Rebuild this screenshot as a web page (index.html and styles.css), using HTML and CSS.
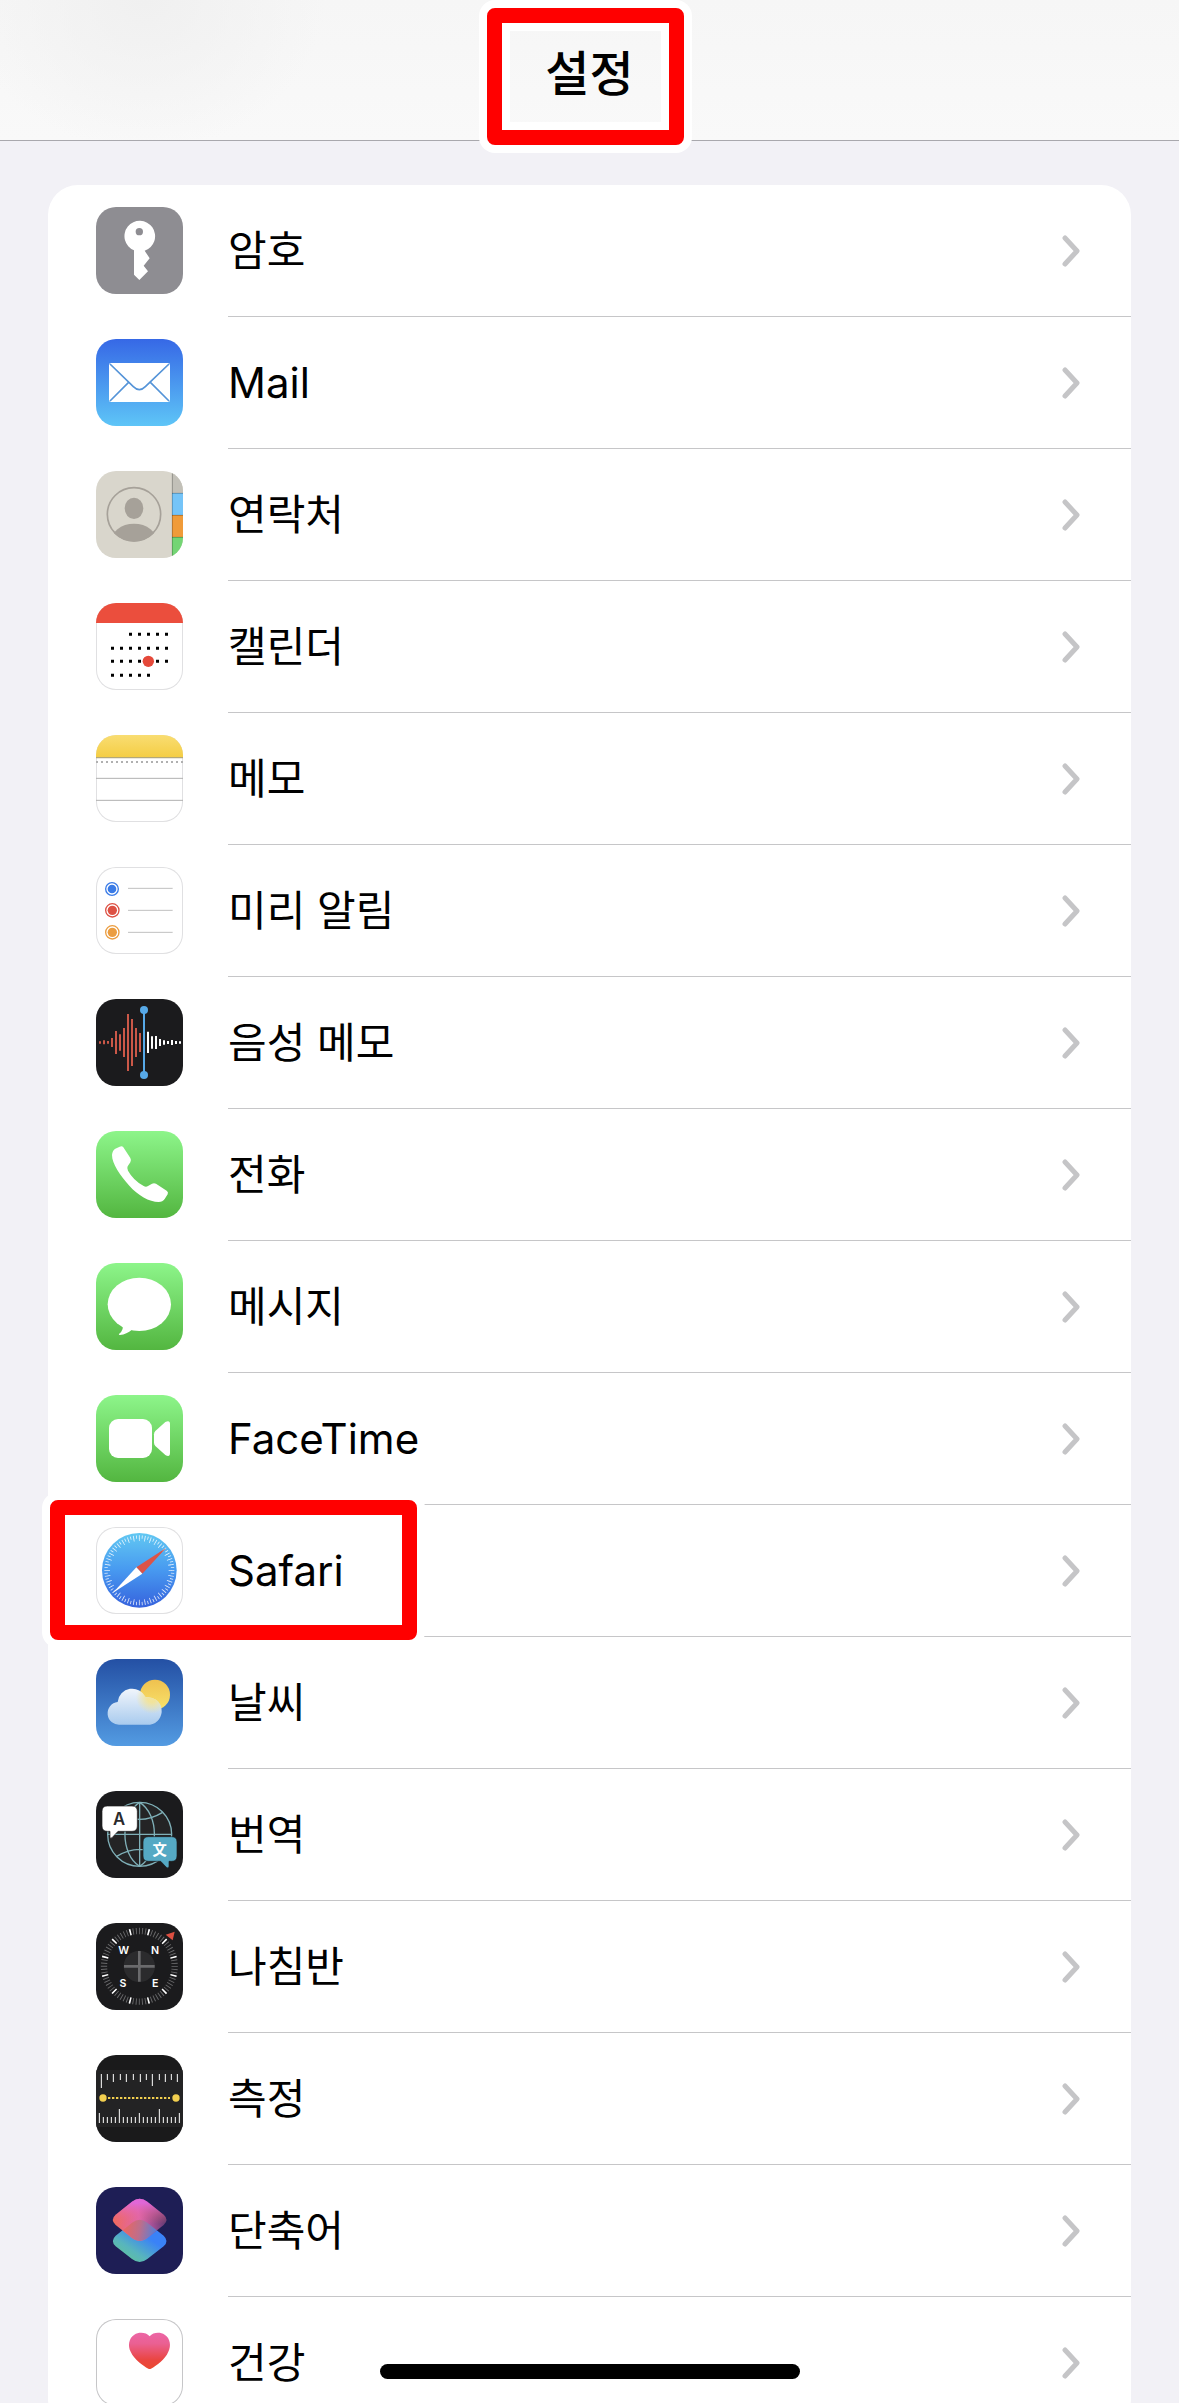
FILE: index.html
```
<!DOCTYPE html>
<html lang="ko">

<head>
    <meta charset="UTF-8">
    <meta name="viewport" content="width=device-width, initial-scale=1.0">
    <title>설정</title>
    <link rel="stylesheet" href="styles.css">
</head>

<body>
    <!-- Shared gradients and the row arrow -->
    <svg class="defs" aria-hidden="true">
        <defs>
            <linearGradient id="green" x1="0" y1="0" x2="0" y2="1">
                <stop offset="0" stop-color="#8df58a" />
                <stop offset="1" stop-color="#53b640" />
            </linearGradient>
            <linearGradient id="mail" x1="0" y1="0" x2="0" y2="1">
                <stop offset="0" stop-color="#3668e6" />
                <stop offset="1" stop-color="#5ec5f7" />
            </linearGradient>
            <linearGradient id="yellow" x1="0" y1="0" x2="0" y2="1">
                <stop offset="0" stop-color="#f9dd72" />
                <stop offset="1" stop-color="#f4cd43" />
            </linearGradient>
            <linearGradient id="safari" x1="0" y1="0" x2="0" y2="1">
                <stop offset="0" stop-color="#62c8f2" />
                <stop offset="0.5" stop-color="#4799f0" />
                <stop offset="1" stop-color="#3662dd" />
            </linearGradient>
            <linearGradient id="sky" x1="0" y1="0" x2="0" y2="1">
                <stop offset="0" stop-color="#2450a4" />
                <stop offset="1" stop-color="#539be2" />
            </linearGradient>
            <linearGradient id="sun" x1="0" y1="0" x2="0" y2="1">
                <stop offset="0" stop-color="#efc14f" />
                <stop offset="1" stop-color="#f8e36c" />
            </linearGradient>
            <linearGradient id="cloud" gradientUnits="userSpaceOnUse" x1="0" y1="84" x2="0" y2="197">
                <stop offset="0" stop-color="#f4f7fc" />
                <stop offset="1" stop-color="#a9cbee" />
            </linearGradient>
            <radialGradient id="glow" gradientUnits="userSpaceOnUse" cx="168" cy="116" r="48">
                <stop offset="0.3" stop-color="#f4e392" stop-opacity="0.9" />
                <stop offset="1" stop-color="#f4e392" stop-opacity="0" />
            </radialGradient>
            <linearGradient id="pink" x1="0" y1="0.6" x2="1" y2="0.5">
                <stop offset="0" stop-color="#f06a5a" />
                <stop offset="0.5" stop-color="#de65b4" />
                <stop offset="1" stop-color="#5d3770" />
            </linearGradient>
            <linearGradient id="coral" x1="0" y1="0" x2="0" y2="1">
                <stop offset="0.1" stop-color="#e268dc" stop-opacity="0.9" />
                <stop offset="0.6" stop-color="#f0685c" stop-opacity="0" />
            </linearGradient>
            <linearGradient id="teal" x1="0.2" y1="1" x2="0.8" y2="0.3">
                <stop offset="0" stop-color="#62c596" />
                <stop offset="0.35" stop-color="#58b5bd" />
                <stop offset="0.8" stop-color="#3a82f7" />
            </linearGradient>
            <linearGradient id="overlap" gradientUnits="userSpaceOnUse" x1="80" y1="110" x2="185" y2="130">
                <stop offset="0" stop-color="#f0665a" />
                <stop offset="0.5" stop-color="#bd6e8c" />
                <stop offset="1" stop-color="#4d80dc" />
            </linearGradient>
            <linearGradient id="heart" x1="0" y1="0" x2="0" y2="1">
                <stop offset="0" stop-color="#ec66a6" />
                <stop offset="0.3" stop-color="#ea6092" />
                <stop offset="0.75" stop-color="#ea4540" />
                <stop offset="1" stop-color="#ea4930" />
            </linearGradient>
            <clipPath id="avatar">
                <circle cx="114" cy="130" r="82" />
            </clipPath>
            <symbol id="arrow" viewBox="0 0 18 32">
                <path d="M3 3L15 16L3 29" fill="none" stroke="#c5c5c7" stroke-width="5" stroke-linecap="round" stroke-linejoin="round" />
            </symbol>
        </defs>
    </svg>

    <header class="navbar">
        <h1 class="title">설정</h1>
        <span class="marker marker-title"></span>
    </header>

    <main class="content">
        <ul class="list">
            <li>
                <a class="row" href="#">
                    <svg class="icon" viewBox="0 0 261 261" aria-hidden="true">
                        <rect width="261" height="261" fill="#8e8d92" />
                        <path d="M114 130A46 46 0 1 1 146 131L161 154L143 176L156 193L130 219L114 203Z" fill="#fff" />
                        <circle cx="130" cy="74" r="11" fill="#8e8d92" />
                    </svg>
                    <span class="row-body">
                        <span class="label">암호</span>
                        <svg class="arrow"><use href="#arrow" /></svg>
                    </span>
                </a>
            </li>
            <li>
                <a class="row" href="#">
                    <svg class="icon" viewBox="0 0 261 261" aria-hidden="true">
                        <rect width="261" height="261" fill="url(#mail)" />
                        <rect x="39" y="72" width="183" height="117" rx="6" fill="#fff" />
                        <path d="M42 75L112 143Q130 161 148 143L219 75M97 131L42 186M164 131L219 186" fill="none" stroke="#5594d8" stroke-width="5" />
                    </svg>
                    <span class="row-body">
                        <span class="label" lang="en">Mail</span>
                        <svg class="arrow"><use href="#arrow" /></svg>
                    </span>
                </a>
            </li>
            <li>
                <a class="row" href="#">
                    <svg class="icon" viewBox="0 0 261 261" aria-hidden="true">
                        <rect width="261" height="261" fill="#d9d6cc" />
                        <rect x="228" width="33" height="66" fill="#c2c0b8" />
                        <rect x="228" y="66" width="33" height="66" fill="#75c4f8" />
                        <rect x="228" y="132" width="33" height="66" fill="#f09b39" />
                        <rect x="228" y="198" width="33" height="63" fill="#74d574" />
                        <path d="M228 67H261M228 133H261M228 199H261M229 0V261" stroke="#000" stroke-opacity="0.25" stroke-width="3" />
                        <circle cx="114" cy="130" r="80" fill="none" stroke="#a6a199" stroke-width="5" />
                        <ellipse cx="114" cy="112" rx="28" ry="32" fill="#a6a199" />
                        <ellipse cx="114" cy="214" rx="70" ry="56" fill="#a6a199" clip-path="url(#avatar)" />
                    </svg>
                    <span class="row-body">
                        <span class="label">연락처</span>
                        <svg class="arrow"><use href="#arrow" /></svg>
                    </span>
                </a>
            </li>
            <li>
                <a class="row" href="#">
                    <svg class="icon icon-light" viewBox="0 0 261 261" aria-hidden="true">
                        <rect width="261" height="60" fill="#eb4e3d" />
                        <path d="M99 94H216M45 136H216M45 175H216M45 217H162" stroke="#000" stroke-width="9" stroke-dasharray="9 18" />
                        <circle cx="157" cy="175" r="17" fill="#e5493a" />
                    </svg>
                    <span class="row-body">
                        <span class="label">캘린더</span>
                        <svg class="arrow"><use href="#arrow" /></svg>
                    </span>
                </a>
            </li>
            <li>
                <a class="row" href="#">
                    <svg class="icon icon-light" viewBox="0 0 261 261" aria-hidden="true">
                        <rect width="261" height="68" fill="url(#yellow)" />
                        <path d="M0 68H261" stroke="#b3a878" stroke-width="4" />
                        <path d="M0 81H261" stroke="#b0b0b0" stroke-width="6" stroke-dasharray="6 9" />
                        <path d="M0 130H261M0 196H261" stroke="#b0b0b0" stroke-width="3" />
                    </svg>
                    <span class="row-body">
                        <span class="label">메모</span>
                        <svg class="arrow"><use href="#arrow" /></svg>
                    </span>
                </a>
            </li>
            <li>
                <a class="row" href="#">
                    <svg class="icon icon-light" viewBox="0 0 261 261" aria-hidden="true">
                        <g stroke-width="4">
                            <circle cx="48" cy="66" r="19" fill="none" stroke="#3a7be6" />
                            <circle cx="48" cy="66" r="13" fill="#3a7be6" />
                            <circle cx="49" cy="130" r="20" fill="none" stroke="#dd5144" />
                            <circle cx="49" cy="130" r="14" fill="#dd5144" />
                            <circle cx="49" cy="196" r="20" fill="none" stroke="#eb9d40" />
                            <circle cx="49" cy="196" r="14" fill="#eb9d40" />
                        </g>
                        <path d="M96 64H230M96 130H230M96 196H230" stroke="#c0c0c0" stroke-width="3" />
                    </svg>
                    <span class="row-body">
                        <span class="label">미리 알림</span>
                        <svg class="arrow"><use href="#arrow" /></svg>
                    </span>
                </a>
            </li>
            <li>
                <a class="row" href="#">
                    <svg class="icon" viewBox="0 0 261 261" aria-hidden="true">
                        <rect width="261" height="261" fill="#1b1b1d" />
                        <path d="M12 127V134M24 124V136M36 126V134M48 117V144M60 96V165M72 106V155M84 87V174M96 45V216M108 60V201M120 87V174M132 102V159" stroke="#cb5848" stroke-width="6" />
                        <path d="M156 98V162M168 112V149M180 111V150M192 120V141M204 124V137M216 126V135M228 123V138M240 126V135M252 127V134" stroke="#fff" stroke-width="6" />
                        <path d="M144 33V228" stroke="#57a9e8" stroke-width="6" />
                        <circle cx="144" cy="33" r="12" fill="#57a9e8" />
                        <circle cx="144" cy="228" r="12" fill="#57a9e8" />
                    </svg>
                    <span class="row-body">
                        <span class="label">음성 메모</span>
                        <svg class="arrow"><use href="#arrow" /></svg>
                    </span>
                </a>
            </li>
            <li>
                <a class="row" href="#">
                    <svg class="icon" viewBox="0 0 261 261" aria-hidden="true">
                        <rect width="261" height="261" fill="url(#green)" />
                        <path d="M71 47Q78 43 82 49L103 81Q107 88 103 94L95 106Q92 112 96 119Q112 148 143 165Q150 169 156 165L168 158Q174 155 180 158L212 179Q218 183 215 190L206 204Q200 213 188 213C160 213 125 192 100 164C72 134 48 98 48 72Q49 58 58 53Z" fill="#fff" />
                    </svg>
                    <span class="row-body">
                        <span class="label">전화</span>
                        <svg class="arrow"><use href="#arrow" /></svg>
                    </span>
                </a>
            </li>
            <li>
                <a class="row" href="#">
                    <svg class="icon" viewBox="0 0 261 261" aria-hidden="true">
                        <rect width="261" height="261" fill="url(#green)" />
                        <ellipse cx="130" cy="124" rx="95" ry="80" fill="#fff" />
                        <path d="M78 186Q86 198 69 213Q67 216 72 216Q92 213 108 200Z" fill="#fff" />
                    </svg>
                    <span class="row-body">
                        <span class="label">메시지</span>
                        <svg class="arrow"><use href="#arrow" /></svg>
                    </span>
                </a>
            </li>
            <li>
                <a class="row" href="#">
                    <svg class="icon" viewBox="0 0 261 261" aria-hidden="true">
                        <rect width="261" height="261" fill="url(#green)" />
                        <rect x="39" y="72" width="129" height="117" rx="27" fill="#fff" />
                        <path d="M178 108L208 81Q222 74 222 87V174Q222 188 208 180L178 153Q174 149 174 143V118Q174 112 178 108Z" fill="#fff" />
                    </svg>
                    <span class="row-body">
                        <span class="label" lang="en">FaceTime</span>
                        <svg class="arrow"><use href="#arrow" /></svg>
                    </span>
                </a>
            </li>
            <li class="marked">
                <a class="row" href="#">
                    <svg class="icon icon-light" viewBox="0 0 261 261" aria-hidden="true">
                        <circle cx="130" cy="130" r="112" fill="url(#safari)" />
                        <circle cx="130" cy="130" r="100" fill="none" stroke="#fff" stroke-opacity="0.8" stroke-width="10" pathLength="72" stroke-dasharray="0.3 0.7" stroke-dashoffset="0.15" />
                        <circle cx="130" cy="130" r="92" fill="none" stroke="#fff" stroke-opacity="0.8" stroke-width="8" pathLength="72" stroke-dasharray="0.3 1.7" stroke-dashoffset="0.15" />
                        <path d="M210 63L121 121L139 140Z" fill="#dc5348" />
                        <path d="M51 197L121 121L139 140Z" fill="#fff" />
                    </svg>
                    <span class="row-body">
                        <span class="label" lang="en">Safari</span>
                        <svg class="arrow"><use href="#arrow" /></svg>
                    </span>
                </a>
                <span class="marker marker-row"></span>
            </li>
            <li>
                <a class="row" href="#">
                    <svg class="icon" viewBox="0 0 261 261" aria-hidden="true">
                        <rect width="261" height="261" fill="url(#sky)" />
                        <circle cx="177" cy="107" r="45" fill="url(#sun)" />
                        <path d="M73 197A34 34 0 0 1 65 129A44 44 0 0 1 149 115A41 41 0 0 1 162 197Z" fill="url(#cloud)" />
                        <path d="M73 197A34 34 0 0 1 65 129A44 44 0 0 1 149 115A41 41 0 0 1 162 197Z" fill="url(#glow)" />
                    </svg>
                    <span class="row-body">
                        <span class="label">날씨</span>
                        <svg class="arrow"><use href="#arrow" /></svg>
                    </span>
                </a>
            </li>
            <li>
                <a class="row" href="#">
                    <svg class="icon" viewBox="0 0 261 261" aria-hidden="true">
                        <rect width="261" height="261" fill="#1b1b1d" />
                        <g fill="none" stroke="#7fb0b8" stroke-width="4">
                            <circle cx="131" cy="130" r="96" fill="#242425" />
                            <path d="M131 34V226M35 130H227M131 34C190 70 190 190 131 226M131 34C72 70 72 190 131 226M62 64Q131 106 200 64M62 196Q131 154 200 196" />
                        </g>
                        <path d="M34 45H108Q124 45 124 61V105Q124 121 108 121H66L48 140Q42 145 42 138V121H34Q18 121 18 105V61Q18 45 34 45Z" fill="#fff" stroke="#1b1b1d" stroke-width="2" />
                        <path d="M157 137H227Q243 137 243 153V195Q243 211 227 211H219V226Q218 235 211 229L194 211H157Q141 211 141 195V153Q141 137 157 137Z" fill="#55a9c4" stroke="#1b1b1d" stroke-width="2" />
                        <text class="icon-text" x="69" y="101" font-size="50" fill="#2a2a2c">A</text>
                        <text class="icon-text" x="191" y="191" font-size="43" fill="#fff">文</text>
                    </svg>
                    <span class="row-body">
                        <span class="label">번역</span>
                        <svg class="arrow"><use href="#arrow" /></svg>
                    </span>
                </a>
            </li>
            <li>
                <a class="row" href="#">
                    <svg class="icon" viewBox="0 0 261 261" aria-hidden="true">
                        <rect width="261" height="261" fill="#1b1b1d" />
                        <circle cx="130" cy="130" r="106" fill="none" stroke="#69696b" stroke-width="19" pathLength="72" stroke-dasharray="0.3 0.7" stroke-dashoffset="0.15" />
                        <circle cx="130" cy="130" r="106" fill="none" stroke="#fff" stroke-width="19" pathLength="72" stroke-dasharray="0.5 5.5" stroke-dashoffset="-2.75" />
                        <circle cx="130" cy="130" r="47" fill="#2b2b2d" />
                        <path d="M130 84V176M84 130H176" stroke="#6a6a6c" stroke-width="8" />
                        <path d="M236 26L209 35L230 52Z" fill="#dc4f41" />
                        <g class="icon-text" font-size="32" fill="#fff">
                            <text x="83" y="93">W</text>
                            <text x="177" y="93">N</text>
                            <text x="81" y="192">S</text>
                            <text x="178" y="192">E</text>
                        </g>
                    </svg>
                    <span class="row-body">
                        <span class="label">나침반</span>
                        <svg class="arrow"><use href="#arrow" /></svg>
                    </span>
                </a>
            </li>
            <li>
                <a class="row" href="#">
                    <svg class="icon" viewBox="0 0 261 261" aria-hidden="true">
                        <rect width="261" height="261" fill="#1a1a1b" />
                        <rect y="45" width="261" height="171" fill="#232324" />
                        <path d="M16 57V99M34 57V75M52 57V81M73 57V75M91 57V81M112 57V75M133 57V81M151 57V75M169 57V93M190 57V75M208 57V81M226 57V75M244 57V81" stroke="#fff" stroke-width="3" />
                        <path d="M10 204V174M22 204V186M34 204V186M46 204V186M58 204V186M70 204V162M82 204V186M94 204V186M106 204V186M118 204V186M130 204V174M142 204V186M154 204V186M166 204V186M178 204V186M190 204V162M202 204V186M214 204V186M226 204V186M238 204V186M250 204V174" stroke="#fff" stroke-width="3" />
                        <path d="M36 129H222" stroke="#f2cf4f" stroke-width="6" stroke-dasharray="7 5" />
                        <circle cx="21" cy="129" r="11" fill="#f2cf4f" />
                        <circle cx="240" cy="129" r="11" fill="#f2cf4f" />
                    </svg>
                    <span class="row-body">
                        <span class="label">측정</span>
                        <svg class="arrow"><use href="#arrow" /></svg>
                    </span>
                </a>
            </li>
            <li>
                <a class="row" href="#">
                    <svg class="icon" viewBox="0 0 261 261" aria-hidden="true">
                        <rect width="261" height="261" fill="#1e1e55" />
                        <path d="M108 107Q131 90 154 107L203 146Q220 162 203 178L154 216Q131 234 108 216L59 178Q42 162 59 146Z" fill="url(#teal)" />
                        <path d="M108 44Q131 27 154 44L203 83Q220 98 203 114L154 153Q131 171 108 153L59 114Q42 98 59 83Z" fill="url(#pink)" />
                        <path d="M108 44Q131 27 154 44L203 83Q220 98 203 114L154 153Q131 171 108 153L59 114Q42 98 59 83Z" fill="url(#coral)" />
                        <path d="M81 130L108 107Q131 90 154 107L182 130L154 153Q131 171 108 153Z" fill="url(#overlap)" />
                    </svg>
                    <span class="row-body">
                        <span class="label">단축어</span>
                        <svg class="arrow"><use href="#arrow" /></svg>
                    </span>
                </a>
            </li>
            <li>
                <a class="row" href="#">
                    <svg class="icon icon-light icon-health" viewBox="0 0 261 261" aria-hidden="true">
                        <path d="M161 52C150 39 128 39 115 47C98 58 95 80 104 98C115 122 140 139 157 149Q161 151 165 149C182 139 207 122 217 98C226 80 223 58 206 47C193 39 172 39 161 52Z" fill="url(#heart)" />
                    </svg>
                    <span class="row-body">
                        <span class="label">건강</span>
                        <svg class="arrow"><use href="#arrow" /></svg>
                    </span>
                </a>
            </li>
        </ul>
    </main>

    <div class="home-indicator"></div>
</body>

</html>
```
FILE: styles.css
```
* {
    box-sizing: border-box;
}

body {
    display: flex;
    flex-direction: column;
    height: 100vh;
    margin: 0;
    overflow: hidden;
    background-color: #f2f1f6;
    color: #000;
    font-family: Inter, "Noto Sans CJK KR", sans-serif;
}

.defs {
    position: absolute;
    width: 0;
    height: 0;
}

/* Top bar */
.navbar {
    position: relative;
    z-index: 1;
    flex: none;
    display: flex;
    justify-content: center;
    padding: 35px 0;
    border-bottom: 1px solid #a9a8ad;
    background: radial-gradient(ellipse 180px 150px at 145px 0, #f0f0f0, rgba(240, 240, 240, 0)), linear-gradient(#f6f6f6, #f9f9f9);
}

.title {
    margin: 0;
    font-family: "Noto Sans CJK KR", sans-serif;
    font-size: 48px;
    font-weight: 500;
    line-height: 70px;
}

/* Settings list */
.content {
    flex: 1;
    min-height: 0;
    padding: 44px 48px 0;
    overflow-y: auto;
    scrollbar-width: none;
}

.list {
    margin: 0;
    padding: 0;
    list-style: none;
    border-radius: 30px;
    background-color: #fff;
}

.row {
    display: flex;
    align-items: flex-start;
    gap: 45px;
    padding-left: 48px;
    color: inherit;
    text-decoration: none;
}

.row-body {
    flex: 1;
    display: flex;
    align-items: center;
    justify-content: space-between;
    height: 132px;
    padding-right: 51px;
    border-bottom: 1px solid #c6c6c8;
}

.label {
    padding-bottom: 6px;
    font-family: "Noto Sans CJK KR", sans-serif;
    font-size: 42px;
    line-height: 60px;
}

.label:lang(en) {
    padding-bottom: 0;
    font-family: Inter, sans-serif;
}

.icon {
    flex: none;
    width: 87px;
    height: 87px;
    margin-top: 22px;
    border-radius: 20px;
}

.icon-light {
    background-color: #fff;
    box-shadow: inset 0 0 0 1px #e0e0e2;
}

.icon-health {
    box-shadow: inset 0 0 0 1px #c6c6c8;
}

.icon-text {
    font-family: Inter, "Noto Sans CJK JP", sans-serif;
    font-weight: 600;
    text-anchor: middle;
}

.arrow {
    flex: none;
    width: 18px;
    height: 32px;
}

/* Red highlight boxes */
.marked {
    position: relative;
}

.marker {
    position: absolute;
    border: 15px solid #f00;
    border-radius: 8px;
    pointer-events: none;
}

.marker-title {
    top: 8px;
    left: 50%;
    width: 197px;
    height: 137px;
    margin-left: -103px;
    box-shadow: 0 0 0 8px #fff, inset 0 0 0 8px #fff;
}

.marker-row {
    top: -5px;
    left: 2px;
    width: 367px;
    height: 140px;
    box-shadow: 0 0 0 8px #fff;
}

.home-indicator {
    position: fixed;
    bottom: 24px;
    left: 50%;
    z-index: 2;
    width: 420px;
    height: 15px;
    margin-left: -210px;
    border-radius: 8px;
    background-color: #000;
}
```
